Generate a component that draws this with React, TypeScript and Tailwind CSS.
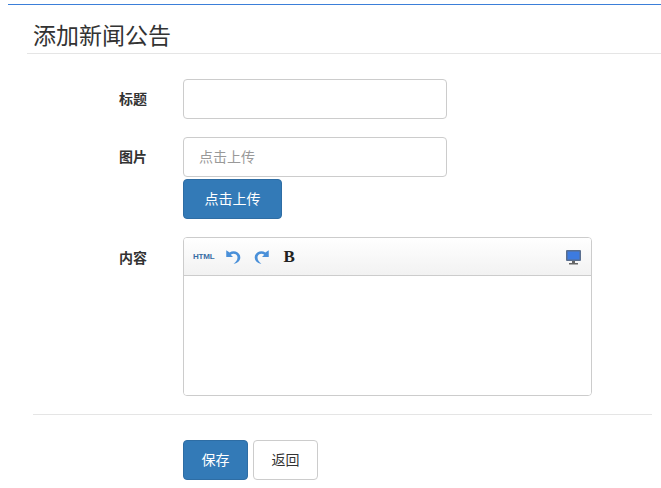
import React from "react";

const font = { fontFamily: '"Liberation Sans", "Noto Sans CJK SC", sans-serif' };

const App: React.FC = () => {
  return (
    <div className="w-[661px] h-[488px] bg-white text-[#333] overflow-hidden" style={font}>
      <div className="ml-[8px] mt-[4px] h-px bg-[#3b7fd9]" />
      <div className="pl-[33px] pt-[16px]">
        <h2 className="text-[23px] leading-[30px] text-[#333]">添加新闻公告</h2>
      </div>
      <div className="ml-[27px] mt-[2px] h-px bg-[#e5e5e5]" />

      <div className="mt-[25px] flex flex-col">
        {/* 标题 */}
        <div className="flex items-center h-[40px]">
          <label className="w-[147px] text-right text-[14px] font-bold">标题</label>
          <input className="ml-[36px] w-[264px] h-[40px] rounded border border-[#ccc] outline-none px-3" />
        </div>

        {/* 图片 */}
        <div className="flex mt-[18px]">
          <label className="w-[147px] text-right text-[14px] font-bold leading-[40px]">图片</label>
          <div className="ml-[36px] flex flex-col">
            <input
              placeholder="点击上传"
              className="w-[264px] h-[40px] rounded border border-[#ccc] outline-none px-[15px] text-[14px] placeholder:text-[#999]"
            />
            <button className="mt-[2px] w-[99px] h-[40px] rounded bg-[#337ab7] border border-[#2e6da4] text-white text-[14px]">
              点击上传
            </button>
          </div>
        </div>

        {/* 内容 */}
        <div className="flex mt-[18px]">
          <label className="w-[147px] text-right text-[14px] font-bold leading-[42px]">内容</label>
          <div className="ml-[36px] w-[409px] h-[159px] rounded border border-[#ccc] flex flex-col overflow-hidden">
            <div className="h-[38px] flex items-center px-[9px] bg-gradient-to-b from-white to-[#f2f2f2] border-b border-[#ccc] shadow-[0_1px_2px_rgba(0,0,0,0.1)]">
              <span className="text-[8px] font-bold text-[#3a6ea5] tracking-tight">HTML</span>
              <svg className="ml-[10px]" width="18" height="18" viewBox="0 0 16 16">
                <path d="M2 2v6h6L6 6c2.5-2 6-0.5 6 2.5 0 2.5-1.5 4-3.5 5.5 4-0.5 6-3 6-5.5 0-5-6-7-9.5-4.5z" fill="#4a90d9" />
              </svg>
              <svg className="ml-[11px]" width="18" height="18" viewBox="0 0 16 16">
                <path d="M14 2v6H8l2-2c-2.5-2-6-0.5-6 2.5 0 2.5 1.5 4 3.5 5.5-4-0.5-6-3-6-5.5 0-5 6-7 9.5-4.5z" fill="#4a90d9" />
              </svg>
              <span className="ml-[12px] text-[17px] font-bold text-[#222]" style={{ fontFamily: '"Liberation Serif", serif' }}>B</span>
              <svg className="ml-auto" width="17" height="16" viewBox="0 0 17 16">
                <rect x="1" y="1" width="15" height="11" rx="1" fill="#5a6f8f" />
                <rect x="2.5" y="2.5" width="12" height="8" fill="#3d7be0" />
                <rect x="7" y="12" width="3" height="2" fill="#666" />
                <rect x="4" y="14" width="9" height="1.5" fill="#666" />
              </svg>
            </div>
            <div className="flex-1 bg-white" />
          </div>
        </div>
      </div>

      <div className="ml-[33px] mr-[9px] mt-[18px] h-px bg-[#e5e5e5]" />

      <div className="flex ml-[183px] mt-[25px] gap-[5px]">
        <button className="w-[65px] h-[40px] rounded bg-[#337ab7] border border-[#2e6da4] text-white text-[14px]">保存</button>
        <button className="w-[65px] h-[40px] rounded bg-white border border-[#ccc] text-[#333] text-[14px]">返回</button>
      </div>
    </div>
  );
};

export default App;
